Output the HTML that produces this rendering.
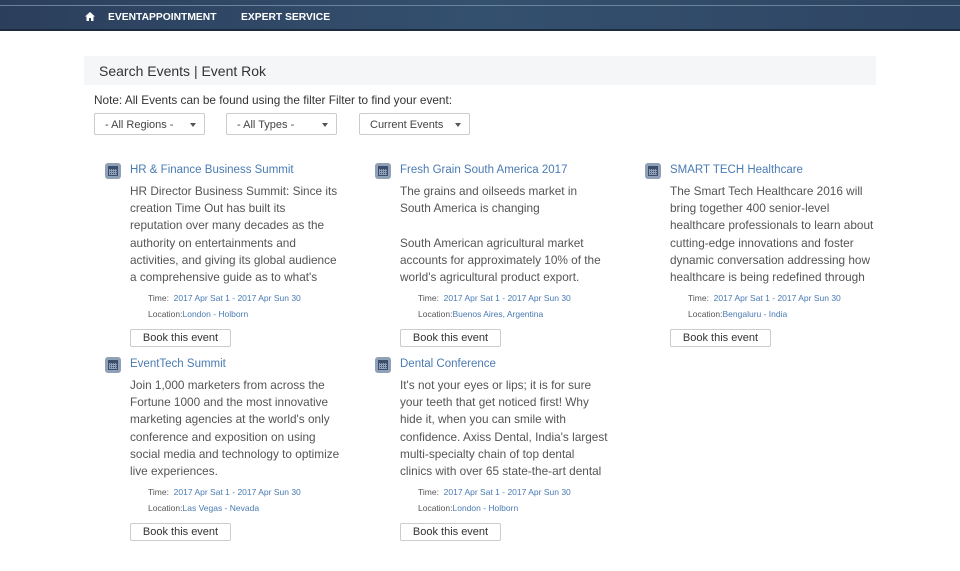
<!DOCTYPE html>
<html><head><style>
body{margin:0;width:960px;height:571px;background:#fff;font-family:"Liberation Sans",sans-serif;position:relative;overflow:hidden}
.hdr{position:absolute;left:0;top:0;width:960px;height:29px;background:linear-gradient(90deg,#2b3f5c,#34506f 50%,#2e4563);border-bottom:2px solid #1d2b3f}
.hdr:before{content:"";position:absolute;left:0;right:0;top:5px;height:1px;background:#6d829d}
.nav{position:absolute;top:12px;font-size:10.3px;font-weight:bold;color:#fff}
.bar{position:absolute;left:84px;top:56px;width:792px;height:29px;background:#f4f6f8}
.bar span{position:absolute;left:15px;top:7px;font-size:14px;color:#333}
.note{position:absolute;left:94px;top:93px;font-size:11.8px;color:#333}
.sel{position:absolute;top:113px;height:22px;border:1px solid #ccc;border-radius:2px;font-size:11px;color:#444;box-sizing:border-box;padding:5px 0 0 10px}
.sel:after{content:"";position:absolute;right:8px;top:9px;border:3.5px solid transparent;border-top:4.5px solid #555;border-bottom:0}
.card{position:absolute;width:240px}
.ic{position:absolute;left:0;top:0;width:16px;height:16px;background:#8fa0b7;border-radius:3px}
.ic:before{content:"";position:absolute;left:3px;top:3px;width:10px;height:10px;background:#3c4e6b}
.ic:after{content:"";position:absolute;left:4px;top:6px;width:8px;height:6px;background:repeating-linear-gradient(90deg,#8fa0b7 0 1px,transparent 1px 2px),repeating-linear-gradient(0deg,#8fa0b7 0 1px,transparent 1px 2px)}
.t{position:absolute;left:25px;top:1px;font-size:11.5px;color:#4a7bb3;white-space:nowrap}
.d{position:absolute;left:25px;top:20px;width:210px;height:104px;overflow:hidden;font-size:11.8px;line-height:17.2px;color:#555}
.m{position:absolute;left:43px;font-size:8.5px;color:#4a7bb3}
.m b{font-weight:normal;color:#555}
.btn{position:absolute;left:25px;top:166px;width:101px;height:18px;border:1px solid #ccc;border-radius:2px;box-sizing:border-box;font-size:11px;color:#333;text-align:center;line-height:16px}
</style></head><body>
<div class="hdr">
<svg style="position:absolute;left:85px;top:12px" width="10" height="9" viewBox="0 0 10 9"><path d="M5 0L0 4.5h1.5V9h2.5V6h2v3h2.5V4.5H10z" fill="#fff"/></svg>
<div class="nav" style="left:108px">EVENTAPPOINTMENT</div>
<div class="nav" style="left:241px">EXPERT SERVICE</div>
</div>
<div class="bar"><span>Search Events | Event Rok</span></div>
<div class="note">Note: All Events can be found using the filter Filter to find your event:</div>
<div class="sel" style="left:94px;width:111px">- All Regions -</div>
<div class="sel" style="left:226px;width:111px">- All Types -</div>
<div class="sel" style="left:359px;width:111px">Current Events</div>

<div class="card" style="left:105px;top:163px">
<div class="ic"></div><div class="t">HR &amp; Finance Business Summit</div>
<div class="d">HR Director Business Summit: Since its creation Time Out has built its reputation over many decades as the authority on entertainments and activities, and giving its global audience a comprehensive guide as to what's happening in their city and beyond.</div>
<div class="m" style="top:130px"><b>Time:</b>&nbsp; 2017 Apr Sat 1 - 2017 Apr Sun 30</div>
<div class="m" style="top:146px"><b>Location:</b>London - Holborn</div>
<div class="btn">Book this event</div></div>

<div class="card" style="left:375px;top:163px">
<div class="ic"></div><div class="t">Fresh Grain South America 2017</div>
<div class="d">The grains and oilseeds market in South America is changing<br><br>South American agricultural market accounts for approximately 10% of the world's agricultural product export.</div>
<div class="m" style="top:130px"><b>Time:</b>&nbsp; 2017 Apr Sat 1 - 2017 Apr Sun 30</div>
<div class="m" style="top:146px"><b>Location:</b>Buenos Aires, Argentina</div>
<div class="btn">Book this event</div></div>

<div class="card" style="left:645px;top:163px">
<div class="ic"></div><div class="t">SMART TECH Healthcare</div>
<div class="d">The Smart Tech Healthcare 2016 will bring together 400 senior-level healthcare professionals to learn about cutting-edge innovations and foster dynamic conversation addressing how healthcare is being redefined through technology.</div>
<div class="m" style="top:130px"><b>Time:</b>&nbsp; 2017 Apr Sat 1 - 2017 Apr Sun 30</div>
<div class="m" style="top:146px"><b>Location:</b>Bengaluru - India</div>
<div class="btn">Book this event</div></div>

<div class="card" style="left:105px;top:357px">
<div class="ic"></div><div class="t">EventTech Summit</div>
<div class="d">Join 1,000 marketers from across the Fortune 1000 and the most innovative marketing agencies at the world's only conference and exposition on using social media and technology to optimize live experiences.</div>
<div class="m" style="top:130px"><b>Time:</b>&nbsp; 2017 Apr Sat 1 - 2017 Apr Sun 30</div>
<div class="m" style="top:146px"><b>Location:</b>Las Vegas - Nevada</div>
<div class="btn">Book this event</div></div>

<div class="card" style="left:375px;top:357px">
<div class="ic"></div><div class="t">Dental Conference</div>
<div class="d">It's not your eyes or lips; it is for sure your teeth that get noticed first! Why hide it, when you can smile with confidence. Axiss Dental, India's largest multi-specialty chain of top dental<br>clinics with over 65 state-the-art dental clinics across the country.</div>
<div class="m" style="top:130px"><b>Time:</b>&nbsp; 2017 Apr Sat 1 - 2017 Apr Sun 30</div>
<div class="m" style="top:146px"><b>Location:</b>London - Holborn</div>
<div class="btn">Book this event</div></div>
</body></html>
